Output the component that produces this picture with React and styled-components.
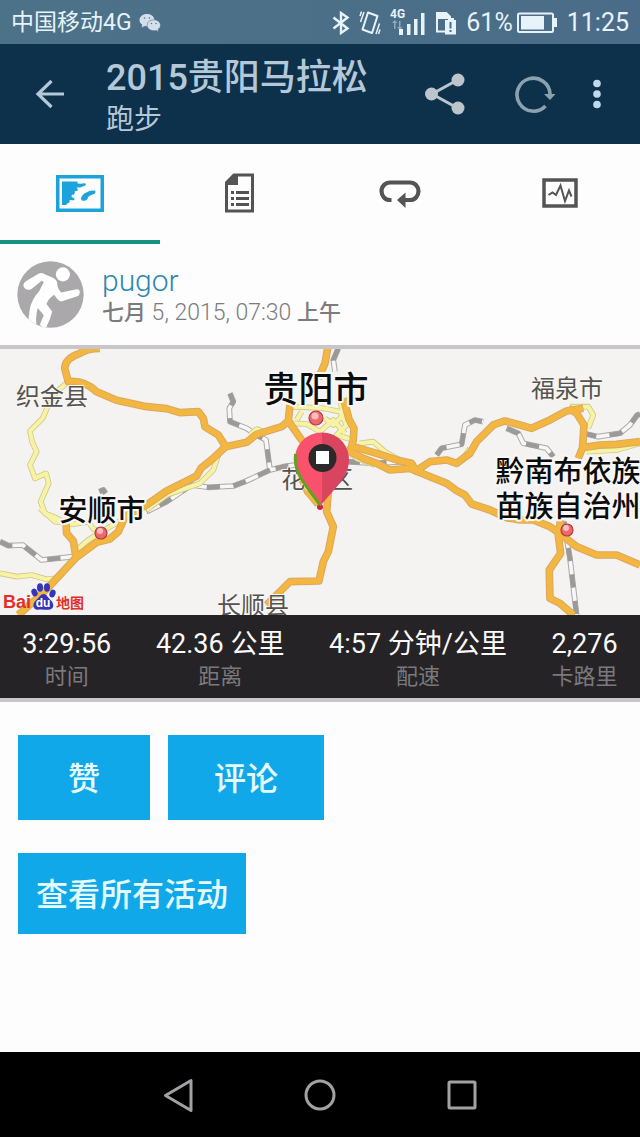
import React from "react";
import styled, { createGlobalStyle } from "styled-components";

const GlobalStyle = createGlobalStyle`
  *, *::before, *::after { box-sizing: border-box; }
  body {
    margin: 0;
    background: #fdfdfd;
    font-family: Roboto, "Noto Sans CJK SC", sans-serif;
  }
  button { font-family: inherit; }
`;

const Screen = styled.div`
  display: flex;
  flex-direction: column;
  min-height: 100vh;
`;

const StatusBar = styled.div`
  display: flex;
  align-items: center;
  justify-content: space-between;
  height: 44px;
  padding: 2px 11px 0;
  background: linear-gradient(90deg, #4c7288, #4b6c88);
  color: #e6f3fa;
`;

const StatusGroup = styled.div`
  display: flex;
  align-items: center;
  gap: ${(p) => p.$gap}px;
`;

const StatusText = styled.span`
  font-size: ${(p) => p.$size}px;
  line-height: 32px;
  white-space: nowrap;
`;

const Header = styled.header`
  display: flex;
  align-items: center;
  height: 100px;
  padding-right: 26px;
  background: #0e314b;
  color: #b4c8d8;
`;

const IconButton = styled.button`
  display: flex;
  align-items: center;
  justify-content: center;
  flex: none;
  width: ${(p) => p.$width}px;
  height: 72px;
  padding: 0;
  border: 0;
  background: none;
  color: inherit;
`;

const Titles = styled.div`
  flex: 1;
  min-width: 0;
  padding: 8px 0 0 6px;
`;

const Title = styled.h1`
  margin: 0;
  font-size: 36px;
  font-weight: 500;
  line-height: 44px;
  white-space: nowrap;
`;

const Subtitle = styled.div`
  font-size: 28px;
  line-height: 40px;
`;

const Tabs = styled.nav`
  display: grid;
  grid-template-columns: repeat(4, 1fr);
  height: 100px;
`;

const Tab = styled.button`
  display: flex;
  align-items: center;
  justify-content: center;
  padding: 2px 0 0;
  border: 0;
  border-bottom: 4px solid ${(p) => (p.$active ? "#179280" : "transparent")};
  background: none;
  color: ${(p) => (p.$active ? "#1ba3dc" : "#545456")};
`;

const Profile = styled.section`
  display: flex;
  align-items: center;
  gap: 18px;
  height: 101px;
  padding: 0 17px;
`;

const UserName = styled.a`
  display: block;
  color: #2b87ae;
  font-size: 30px;
  font-weight: 300;
  line-height: 36px;
  text-decoration: none;
`;

const ActivityDate = styled.time`
  display: block;
  color: #7c7c7e;
  font-size: 23px;
  font-weight: 300;
  line-height: 28px;
`;

const CjkPart = styled.span`
  font-size: 22px;
  font-weight: 500;
`;

const Summary = styled.section`
  border-top: 4px solid #c8c6c9;
  border-bottom: 4px solid #c8c6c9;
`;

const MapView = styled.svg`
  display: block;
  width: 100%;
  height: auto;
  background: #f4f3f1;
  font-family: "Noto Sans CJK SC", sans-serif;
`;

const Stats = styled.dl`
  display: flex;
  justify-content: space-around;
  height: 83px;
  margin: 0;
  padding-top: 11px;
  background: #252326;
  text-align: center;
`;

const Stat = styled.div`
  display: flex;
  flex-direction: column-reverse;
  justify-content: flex-end;
`;

const StatLabel = styled.dt`
  color: #7b797c;
  font-size: 22px;
  line-height: 30px;
`;

const StatValue = styled.dd`
  margin: 0;
  color: #fafafa;
  font-size: 27px;
  line-height: 36px;
  white-space: nowrap;
`;

const Actions = styled.section`
  display: flex;
  flex: 1;
  flex-direction: column;
  align-items: flex-start;
  gap: 33px;
  padding: 33px 18px;
`;

const ActionRow = styled.div`
  display: flex;
  gap: 18px;
`;

const ActionButton = styled.button`
  height: ${(p) => p.$height}px;
  padding: 2px ${(p) => p.$pad}px 0;
  border: 0;
  background: #11a8ea;
  color: #e4fbff;
  font-size: 32px;
  font-weight: 500;
  line-height: 48px;
`;

const SystemNav = styled.nav`
  display: flex;
  align-items: center;
  justify-content: center;
  gap: 70px;
  height: 85px;
  background: #000;
  color: #a3a1a4;
`;

const stats = [
  ["时间", "3:29:56"],
  ["距离", "42.36 公里"],
  ["配速", "4:57 分钟/公里"],
  ["卡路里", "2,276"],
];

function WeChatIcon() {
  return (
    <svg width="22" height="20" viewBox="0 0 22 20">
      <path fill="#d3e0ec" d="M8 1C3.700 1 .5 3.700.5 7c0 2 1 3.700 2.800 4.800L2.600 14.500l3-1.600c.8.2 1.600.3 2.400.3 4.200 0 7.400-2.700 7.400-6.100S12.200 1 8 1z" />
      <path fill="#d3e0ec" stroke="#4d7089" strokeWidth=".6" d="M14.800 6.800c3.700 0 6.700 2.400 6.700 5.500 0 1.700-1 3.200-2.500 4.200l.6 2.300-2.600-1.400c-.7.2-1.400.3-2.200.3-3.800 0-6.700-2.400-6.700-5.400s2.900-5.500 6.700-5.500z" />
      <g fill="#4d7089"><circle cx="5.500" cy="5" r=".8" /><circle cx="10.500" cy="5" r=".8" /><circle cx="12.500" cy="10.500" r=".7" /><circle cx="17" cy="10.500" r=".7" /></g>
    </svg>
  );
}

function BluetoothIcon() {
  return (
    <svg width="18" height="24" viewBox="0 0 18 24" fill="none" stroke="currentColor" strokeWidth="2.400">
      <path d="M1.500 6.500l14 11L9 22V2l6.500 4.500-14 11" />
    </svg>
  );
}

function VibrateIcon() {
  return (
    <svg width="22" height="26" viewBox="0 0 22 26" fill="none" stroke="currentColor">
      <path strokeWidth="2" d="M9 2.500l9.500 3.500-5.500 17L3.500 19.500z" strokeLinejoin="round" />
      <path strokeWidth="1.500" d="M5 2L1.500 12M2.500 1.500L1 6M20.500 13.500L17 24M21 19.500L19.500 24" />
    </svg>
  );
}

function SignalIcon() {
  return (
    <svg width="36" height="30" viewBox="0 0 36 30" fill="currentColor">
      <text x="0" y="10" fontSize="12" fontWeight="700">4G</text>
      <path opacity=".45" d="M4 13h1.500v8H4zM2 15l2.800-3 2.700 3zM9 13h1.500v8H9zM7 19h5.500l-2.700 3z" />
      <path d="M9 21h4v6H9zM17 16h3.500v11H17zM24 11h3.500v16H24zM31 5h3.500v22H31z" />
    </svg>
  );
}

function SimIcon() {
  return (
    <svg width="22" height="24" viewBox="0 0 22 24">
      <path fill="none" stroke="currentColor" strokeWidth="2" d="M10 20.500H2V2h9l4 4v3" />
      <path fill="currentColor" d="M1 1h10.500L16 5.500V8H1z" />
      <path fill="currentColor" d="M10 9h3V7h6v2h2v14.500H10z" />
      <path fill="#4b6c88" d="M14.500 11h2v6.500h-2zM14.500 19h2v2h-2z" />
    </svg>
  );
}

function BatteryIcon() {
  return (
    <svg width="41" height="22" viewBox="0 0 41 22">
      <rect x="1" y="1.500" width="35" height="18.500" rx="1.500" fill="none" stroke="currentColor" strokeWidth="2" />
      <path fill="currentColor" d="M4 4h23v13.500H4zM37 6h3v9h-3z" />
    </svg>
  );
}

function MapTabIcon() {
  return (
    <svg width="48" height="37" viewBox="0 0 48 37" fill="currentColor">
      <rect x="1.750" y="1.750" width="44.500" height="33.500" fill="none" stroke="currentColor" strokeWidth="3.500" />
      <path d="M6 6.500h15.500v2l3 .3 4.500-.6c1.200.5 1.200 1.600.2 2.200l-5 2-3.700.2 1.500 2c-.5 1.500-1.700 1.800-3.500 1.600l.3 1.800c-.5 1.600-1.300 2-2.800 1.800l-.6 2 3 1.600c.3 1.500-.5 2.100-2.500 1.900l-2.500-.3.500 2-2.500 1.500-1.500 1.500H6z" />
      <path d="M39 15.500l-5 .2-5.700 2.700c-2 1.800-3.300 3.600-3.300 5.300.4 2.200 2.300 2.400 4.300 1.800 1.800-.6 2.600-1.700 2.700-3.500l2.600-1.800 3.600-1.200c1.300-.7 1.600-2.400.8-3.500z" />
    </svg>
  );
}

function DetailsIcon() {
  return (
    <svg width="30" height="40" viewBox="0 0 30 40" fill="currentColor">
      <path fill="none" stroke="currentColor" strokeWidth="3" d="M9 2h18.500v36h-26V9.500z" />
      <path d="M8.500 1H13v11H1V9zM6 18h3v3H6zM11 18h13v3H11zM6 24h3v3H6zM11 24h13v3H11zM6 30h3v3H6zM11 30h13v3H11z" />
    </svg>
  );
}

function LapsIcon() {
  return (
    <svg width="42" height="30" viewBox="0 0 42 30">
      <path fill="none" stroke="currentColor" strokeWidth="4.200" d="M12.500 22h-1.500a8.500 8.750 0 0 1 0-17.500h20a8.500 8.750 0 0 1 0 17.500h-5" />
      <path fill="currentColor" d="M18 22L26.500 14.500v15.500z" />
    </svg>
  );
}

function ChartTabIcon() {
  return (
    <svg width="36" height="30" viewBox="0 0 36 30" fill="none" stroke="currentColor">
      <rect x="2" y="2" width="32" height="26" strokeWidth="3.500" />
      <path strokeWidth="2" d="M6.500 17l4-2.500 3.500 2.500 4.500-9.500 4.500 15.500 4-10.500 2.500 6" />
    </svg>
  );
}

function RunnerAvatar() {
  return (
    <svg width="67" height="67" viewBox="0 0 200 200">
      <defs><clipPath id="avatar-circle"><circle cx="100" cy="100" r="99" /></clipPath></defs>
      <g clipPath="url(#avatar-circle)">
        <rect width="200" height="200" fill="#aaa8ab" />
        <circle cx="137" cy="40" r="21" fill="#fff" />
        <path fill="#fff" d="M20 76Q16 66 29 59L64 38Q74 33 86 41L107 50Q120 56 120 68Q120 82 132 94L178 84Q190 85 187 97Q186 104 178 106L132 121Q124 121 111 101Q94 112 88 128L105 151L98 174L84 205L68 190L80 162L62 140Q55 162 58 192L26 210Q35 180 38 145Q41 119 67 89L80 63L74 59L42 84Q26 90 20 76Z" />
      </g>
    </svg>
  );
}

const highway = [
  "M300 10Q262 10 240 25Q195 40 194 70L205 110Q253 105 290 140L350 166L440 185L500 191L540 203L595 200L610 220L615 245L655 270L677 305L740 292L770 268L845 245L865 228L870 180",
  "M677 305L640 340L603 370L590 393L500 438L440 480L375 515L355 560L330 582L290 592L228 638L150 722L100 770L55 810",
  "M228 638L220 588L200 565L198 535",
  "M865 228L905 285L935 315",
  "M983 10L975 55L955 100M1030 160L1048 225L1062 250L1060 285L1050 320L1090 340L1130 355L1170 375L1230 370L1248 378L1290 350L1340 345L1370 355L1410 325L1430 290L1480 240L1515 228L1560 240L1595 250L1650 225L1700 198L1750 190",
  "M1060 305L1130 325L1190 345L1235 355L1248 378L1340 415L1370 437L1395 450L1415 477L1470 495L1520 518L1560 525L1600 525L1650 545L1685 570L1730 605L1790 630L1850 630L1920 660",
  "M1682 525L1675 570L1682 625L1648 675L1650 760L1680 775L1720 810",
  "M1705 190L1730 205L1752 240L1748 308L1735 340M1748 308L1800 300L1850 298L1920 290",
  "M985 440L980 500L1000 545L985 620L970 650L957 708L870 710L840 740L800 780",
  "M905 400L923 440L955 478",
];

const localRoads = [
  "M205 110L170 140L145 180L128 220L90 258L96 290L110 320L90 360L105 400L138 385L146 415L122 470L135 505L160 515L190 530L220 538L265 530L280 552L305 560L265 585L230 615",
  "M120 490L165 530L220 538M655 330L640 375L600 415L500 450L440 495M750 270L770 252L790 260",
  "M305 560L365 525L415 500",
  "M0 685L50 695L95 690L140 703L170 700",
  "M870 185L920 187L970 190L1020 200L1040 240L1010 270L1060 285M875 235L920 237L960 260L1000 225L1035 265M905 200L890 225M1020 165L1030 210L1000 240L975 220M1080 295L1120 290L1155 320L1200 345L1230 365",
  "M1710 185L1765 185L1780 210L1765 250M1760 320L1850 315L1920 295",
  "M1390 340L1410 310M1035 310L1070 340L1125 360",
];

const railways = [
  "M690 145L700 170L688 190L690 230L740 250L770 270L798 285L810 375L850 365L885 360M810 375L735 410L700 423L625 427L575 420L500 470L440 500",
  "M0 590L25 602L68 600L125 645L220 635",
  "M1015 10L1000 45L1005 80M1040 350L1130 355L1205 350",
  "M1310 330L1325 310L1385 298L1395 240L1425 225L1450 230M1520 250L1555 265L1570 295L1640 310L1660 335",
  "M1750 265L1795 275L1860 265L1890 240L1912 210L1920 208M1692 530L1710 640L1730 810",
  "M298 440L310 435L317 445",
];

function RouteMap() {
  const label = { textAnchor: "middle", paintOrder: "stroke", stroke: "#f8f7f5", strokeLinejoin: "round" };
  const city = { ...label, fill: "#0c0c0c", strokeWidth: 4, fontWeight: 500 };
  const county = { ...label, fill: "#55534f", strokeWidth: 2, fontSize: 24 };
  return (
    <MapView viewBox="0 0 640 266" role="img" aria-label="贵阳市">
      <g transform="translate(0 -4) scale(.3333)" fill="none" strokeLinejoin="round">
        {railways.map((d) => (
          <g key={d}>
            <path d={d} stroke="#aaa9a8" strokeWidth="17" />
            <path d={d} stroke="#f7f7f7" strokeWidth="11" />
            <path d={d} stroke="#9b9a99" strokeWidth="14" strokeDasharray="40 40" />
          </g>
        ))}
        {localRoads.map((d) => <path key={d} d={d} stroke="#cdc98d" strokeWidth="17" />)}
        {localRoads.map((d) => <path key={d} d={d} stroke="#f8f3a4" strokeWidth="12" />)}
        {highway.map((d) => <path key={d} d={d} stroke="#d9a860" strokeWidth="23" />)}
        {highway.map((d) => <path key={d} d={d} stroke="#f3b640" strokeWidth="17" />)}
      </g>

      <text x="52" y="56" {...county}>织金县</text>
      <text x="567" y="48" {...county}>福泉市</text>
      <text x="317" y="139" {...county}>花溪区</text>
      <text x="253" y="265" {...county}>长顺县</text>
      <text x="316" y="53" fontSize="35" {...city}>贵阳市</text>
      <text x="102" y="172" fontSize="29" {...city}>安顺市</text>
      <text x="568" y="133" fontSize="29" {...city}>黔南布依族</text>
      <text x="568" y="168" fontSize="29" {...city}>苗族自治州</text>

      {[[316, 69, 7], [101, 184, 6], [567, 181, 6]].map(([x, y, r]) => (
        <g key={x}>
          <circle cx={x} cy={y} r={r} fill="#f0686d" stroke="#ad3c42" strokeWidth="1.200" />
          <circle cx={x - 1} cy={y - 2} r={r / 2} fill="#fbc0be" />
        </g>
      ))}

      <circle cx="320" cy="158" r="3" fill="#cf1f43" />
      <path fill="#fa526d" d="M322 83.500C307 83.500 295 95 295 110.500C295 127 306 136 320.500 157.500L322 155Z" />
      <path fill="#d9455f" d="M322 83.500C337 83.500 349 95 349 110.500C349 127 338 136 322 155Z" />
      <path d="M295.500 105C293 126 308 138 320 156" fill="none" stroke="#62a022" strokeWidth="3" />
      <circle cx="322.500" cy="109" r="14" fill="#2b292a" />
      <rect x="316" y="102" width="13" height="13" fill="#fff" />

      <g fill="#3435b8">
        <ellipse cx="34.500" cy="243.500" rx="3" ry="4" transform="rotate(-20 34.500 243.500)" />
        <ellipse cx="40" cy="238.500" rx="3" ry="4.200" />
        <ellipse cx="47" cy="238.500" rx="3" ry="4.200" />
        <ellipse cx="52.500" cy="244.500" rx="3" ry="4" transform="rotate(20 52.500 244.500)" />
        <path d="M43.500 245c3 0 4 3 6.500 5.500 5 4 4 10-1 10.200-4 .2-7-.7-11 0-5 .5-6.500-6-1.500-10 3-2.500 4-5.700 7-5.700z" />
      </g>
      <text x="3" y="259" fontFamily="Liberation Sans" fontSize="18" fontWeight="700" fill="#e0302c">Bai</text>
      <text x="43" y="258" textAnchor="middle" fontFamily="Liberation Sans" fontSize="12" fontWeight="700" fill="#fff">du</text>
      <text x="56" y="259" fontSize="14" fontWeight="700" fill="#e0302c">地图</text>
    </MapView>
  );
}

export default function App() {
  return (
    <Screen>
      <GlobalStyle />
      <StatusBar>
        <StatusGroup $gap={7}>
          <StatusText $size={23}>中国移动4G</StatusText>
          <WeChatIcon />
        </StatusGroup>
        <StatusGroup $gap={9}>
          <BluetoothIcon />
          <VibrateIcon />
          <SignalIcon />
          <SimIcon />
          <StatusGroup $gap={4}>
            <StatusText $size={25}>61%</StatusText>
            <BatteryIcon />
          </StatusGroup>
          <StatusText $size={25}>11:25</StatusText>
        </StatusGroup>
      </StatusBar>

      <Header>
        <IconButton $width={100} aria-label="返回">
          <svg width="30" height="30" viewBox="0 0 30 30" fill="none" stroke="currentColor" strokeWidth="3.200">
            <path d="M29 15H3M16.500 2L3 15l13.500 13" />
          </svg>
        </IconButton>
        <Titles>
          <Title>2015贵阳马拉松</Title>
          <Subtitle>跑步</Subtitle>
        </Titles>
        <IconButton $width={90} aria-label="分享">
          <svg width="42" height="42" viewBox="0 0 42 42" fill="#bcc4cc">
            <path d="M33.500 7L8 21l25.500 14" fill="none" stroke="#bcc4cc" strokeWidth="3" />
            <circle cx="7.500" cy="21" r="6.500" />
            <circle cx="34" cy="7" r="6.500" />
            <circle cx="34" cy="35" r="6.500" />
          </svg>
        </IconButton>
        <IconButton $width={90} aria-label="刷新">
          <svg width="40" height="40" viewBox="0 0 40 40">
            <path d="M30.500 32A16.500 16.500 0 1 1 35 20" fill="none" stroke="#8ba1ad" strokeWidth="3.600" />
            <path d="M29 20h11.500L35 26z" fill="#8ba1ad" />
          </svg>
        </IconButton>
        <IconButton $width={34} aria-label="更多">
          <svg width="8" height="30" viewBox="0 0 8 30" fill="#bed9ec">
            <circle cx="4" cy="4.500" r="3.800" />
            <circle cx="4" cy="15" r="3.800" />
            <circle cx="4" cy="25.500" r="3.800" />
          </svg>
        </IconButton>
      </Header>

      <Tabs>
        <Tab $active aria-label="地图"><MapTabIcon /></Tab>
        <Tab aria-label="详情"><DetailsIcon /></Tab>
        <Tab aria-label="计圈"><LapsIcon /></Tab>
        <Tab aria-label="图表"><ChartTabIcon /></Tab>
      </Tabs>

      <Profile>
        <RunnerAvatar />
        <div>
          <UserName href="#pugor">pugor</UserName>
          <ActivityDate dateTime="2015-07-05T07:30">
            <CjkPart>七月</CjkPart> 5, 2015, 07:30 <CjkPart>上午</CjkPart>
          </ActivityDate>
        </div>
      </Profile>

      <Summary>
        <RouteMap />
        <Stats>
          {stats.map(([label, value]) => (
            <Stat key={label}>
              <StatLabel>{label}</StatLabel>
              <StatValue>{value}</StatValue>
            </Stat>
          ))}
        </Stats>
      </Summary>

      <Actions>
        <ActionRow>
          <ActionButton $height={85} $pad={50}>赞</ActionButton>
          <ActionButton $height={85} $pad={46}>评论</ActionButton>
        </ActionRow>
        <ActionButton $height={81} $pad={18}>查看所有活动</ActionButton>
      </Actions>

      <SystemNav>
        <IconButton $width={72} aria-label="后退">
          <svg width="32" height="34" viewBox="0 0 32 34" fill="none" stroke="currentColor" strokeWidth="3" strokeLinejoin="round">
            <path d="M29 2.500v30L3.500 17.500z" />
          </svg>
        </IconButton>
        <IconButton $width={72} aria-label="主页">
          <svg width="32" height="32" viewBox="0 0 32 32" fill="none" stroke="currentColor" strokeWidth="3">
            <circle cx="16" cy="16" r="14" />
          </svg>
        </IconButton>
        <IconButton $width={72} aria-label="最近任务">
          <svg width="30" height="30" viewBox="0 0 30 30" fill="none" stroke="currentColor" strokeWidth="3">
            <rect x="2" y="2" width="26" height="26" rx="1" />
          </svg>
        </IconButton>
      </SystemNav>
    </Screen>
  );
}
